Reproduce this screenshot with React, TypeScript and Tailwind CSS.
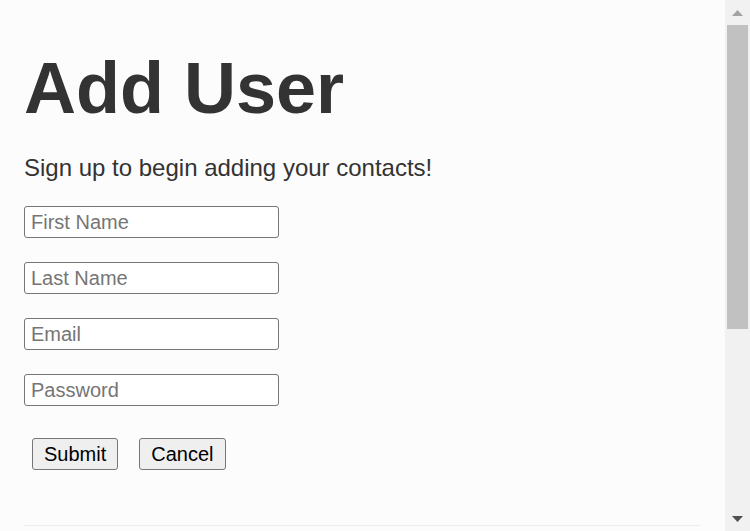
export default function App() {
  const fields = ['First Name', 'Last Name', 'Email', 'Password'];

  return (
    <div className="flex h-[531px] overflow-hidden bg-[#fcfcfc] font-['Liberation_Sans',Arial,sans-serif] text-[#333]">
      <main className="flex-1 overflow-hidden px-6 pt-[47px]">
        <h1 className="text-[72px] leading-[83px] font-bold text-[#333]">Add User</h1>
        <p className="mt-[24px] text-[24px] leading-[28px] text-[#333]">
          Sign up to begin adding your contacts!
        </p>
        <form className="mt-6 flex flex-col" onSubmit={(e) => e.preventDefault()}>
          <div className="flex flex-col gap-6">
            {fields.map((name) => (
              <input
                key={name}
                type={name === 'Password' ? 'password' : name === 'Email' ? 'email' : 'text'}
                placeholder={name}
                className="h-8 w-[255px] rounded-[3px] border border-[#767676] bg-white px-[6px] text-[20px] text-black placeholder:text-[#757575]"
              />
            ))}
          </div>
          <div className="mt-6 flex gap-[5px]">
            <button className="m-2 h-8 rounded-[3px] border border-[#767676] bg-[#efefef] px-[11px] text-[20px] text-black">
              Submit
            </button>
            <button className="m-2 h-8 rounded-[3px] border border-[#767676] bg-[#efefef] px-[11px] text-[20px] text-black">
              Cancel
            </button>
          </div>
        </form>
        <hr className="mt-[47px] border-t border-[#eeeeee]" />
      </main>

      {/* scrollbar */}
      <div className="flex w-[25px] flex-col bg-[#f1f1f1]">
        <div className="flex h-[25px] items-center justify-center">
          <svg width="11" height="6" viewBox="0 0 11 6">
            <polygon points="5.5,0 11,6 0,6" fill="#a3a3a3" />
          </svg>
        </div>
        <div className="mx-[2px] h-[304px] bg-[#c1c1c1]" />
        <div className="flex-1" />
        <div className="flex h-[25px] items-center justify-center">
          <svg width="11" height="6" viewBox="0 0 11 6">
            <polygon points="0,0 11,0 5.5,6" fill="#505050" />
          </svg>
        </div>
      </div>
    </div>
  );
}
